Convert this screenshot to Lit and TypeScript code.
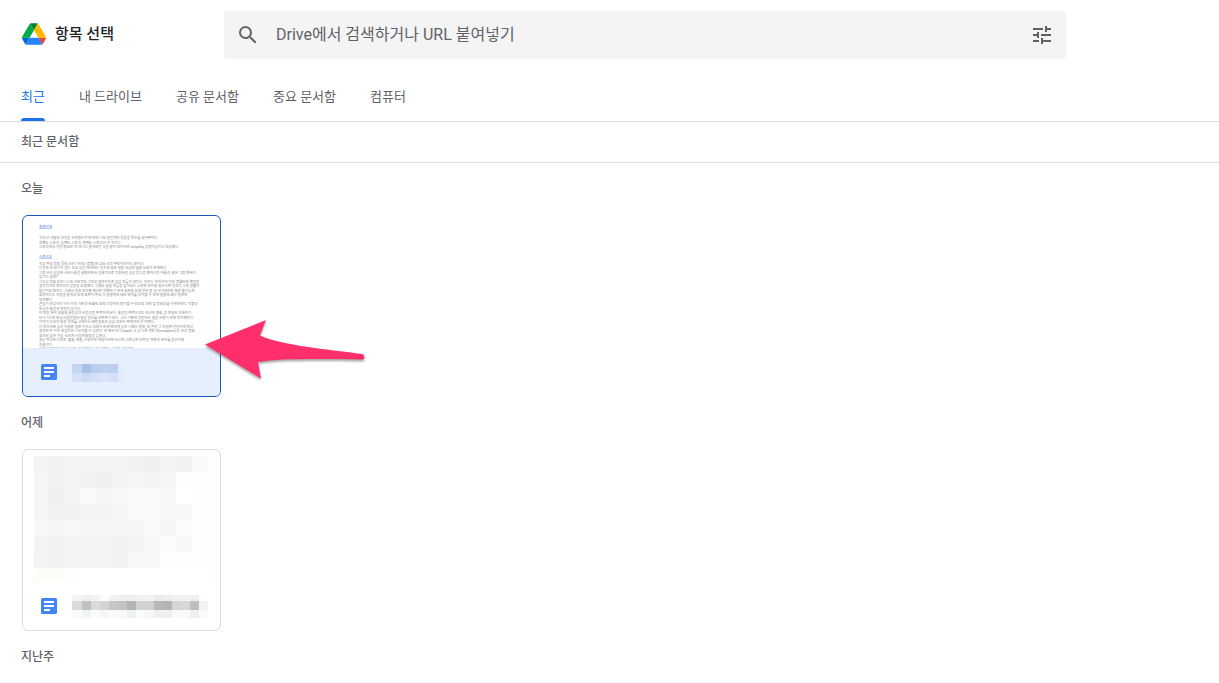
import { LitElement, html, svg, css } from "lit";
import { customElement, property, state } from "lit/decorators.js";
import { classMap } from "lit/directives/class-map.js";

type Row = [y: number, height: number, colors: string[]];

interface Mosaic {
  width: number;
  height: number;
  edges: number[];
  rows: Row[];
}

const NAME_TODAY: Mosaic = {
  width: 136,
  height: 24,
  edges: [0, 10, 19, 28, 37, 46, 52],
  rows: [
    [4, 9, ["#c5d5f2", "#a9c1ea", "#b9cdf0", "#bfd0f0", "#bccff0", "#e2ebfb"]],
    [13, 9, ["#d3e1f8", "#cbdbf6", "#d3e1f8", "#dae5fa", "#d3e0f8", "#e3ecfc"]],
  ],
};

const NAME_YESTERDAY: Mosaic = {
  width: 136,
  height: 24,
  edges: [0, 10, 19, 28, 37, 46, 55, 64, 73, 82, 91, 100, 109, 118, 127, 136],
  rows: [
    [1, 6, ["#f4f4f4", "#efefef", "#f4f4f4", "#fbfdfc", "#f3f3f3", "#efefef", "#eeeeee", "#f1f2f1", "#f3f3f3", "#ececec", "#eeeeee", "#f1f1f1", "#f2f2f2", "#eeeeee", "#fdfdfd"]],
    [7, 9, ["#d9dadb", "#bfc0c0", "#dadbdb", "#d3d5d5", "#c5c6c7", "#c2c3c3", "#b3b5b4", "#d1d2d2", "#d0d1d1", "#b7b8b8", "#b3b5b4", "#d3d4d5", "#d8d8d9", "#bebfbf", "#f3f3f3"]],
    [16, 8, ["#f8fafb", "#f2f5f5", "#fafcfb", "#f5f7f7", "#f9fbfa", "#f7f8f8", "#eef2f0", "#fafbfb", "#f5f6f6", "#eff1f0", "#eff1f0", "#f8f9f9", "#f9fafa", "#eef1f0", "#fafbfb"]],
  ],
};

const PREVIEW_YESTERDAY: Mosaic = {
  width: 197,
  height: 134,
  edges: [11, 25, 41, 57, 73, 89, 105, 121, 137, 153, 169, 185, 190],
  rows: [
    [6, 16, ["#f3f3f3", "#f2f2f2", "#f3f3f3", "#f3f3f3", "#f3f3f3", "#f3f3f3", "#f2f2f2", "#efefef", "#f3f3f3", "#f2f2f2", "#fafafa", "#fefefe"]],
    [22, 16, ["#f5f5f5", "#f1f1f1", "#f3f3f3", "#f2f2f2", "#f0f0f0", "#f4f4f4", "#f6f6f6", "#f4f4f4", "#f6f6f6", "#fdfdfd", "#fefefe", "#fefefe"]],
    [38, 16, ["#f5f5f5", "#f0f0f0", "#f3f3f3", "#f9f9f9", "#f5f5f5", "#f7f7f7", "#fafafa", "#fafafa", "#f8f8f8", "#ffffff", "#fefefe", "#fefefe"]],
    [54, 16, ["#f5f5f5", "#f2f2f2", "#f2f2f2", "#f3f3f3", "#f4f4f4", "#f5f5f5", "#fafafa", "#fafafa", "#f8f8f8", "#f8f8f8", "#fefefe", "#fefefe"]],
    [70, 16, ["#f8f8f8", "#f5f5f5", "#f8f8f8", "#f6f6f6", "#f6f6f6", "#f6f6f6", "#f6f6f6", "#f9f9f9", "#f6f6f6", "#fbfbfb", "#fefefe", "#fefefe"]],
    [86, 16, ["#f4f4f4", "#f1f1f1", "#f4f4f4", "#f3f3f3", "#f3f3f3", "#f2f2f2", "#f4f4f4", "#f8f8f8", "#fbfbfb", "#f8f8f8", "#fdfdfd", "#fefefe"]],
    [102, 16, ["#f3f3f3", "#f2f2f2", "#f4f4f4", "#f3f3f3", "#f3f3f3", "#f2f2f2", "#f8f8f8", "#f8f8f8", "#fdfdfd", "#fefefe", "#fefefe", "#fefefe"]],
    [118, 16, ["#fdfcf9", "#fdfcf7", "#fefefe", "#ffffff", "#ffffff", "#ffffff", "#ffffff", "#ffffff", "#ffffff", "#ffffff", "#ffffff", "#fdfdfd"]],
  ],
};

/* Page lines as [baseline, text, heading?]; the page is drawn at half size. */
const PAGE_LINES: [number, string, boolean?][] = [
  [25, "실제이해", true],
  [48, "'작으신 사람의 마음을 사로잡는가'에 대한 나의 경험적인 결론을 특수를 실어주었다."],
  [57, "첫째도 스토리, 둘째도 스토리, 셋째도 스토리가 전 것이다."],
  [66, "스토리에서 가장 중요한 게 하나고 들어오던 것을 같이 처우리로 empathy 감정이입이고 대답했다."],
  [85, "스토리고", true],
  [99, "작금 주요 명품 론칭 소비 기타도 (명품)와 교육 서전 주인이라마도 같이다."],
  [108, "다음의 한 세기가 넘는 인류 심험 역사에는 부수의 많은 실용 사상의 넓혔 사회가 존재한다."],
  [117, "그럼 우리 성공한 서비스들을 살펴보면서 공통적으로 적용되던 성공 방식을 봤어났던 아들과, 같은 그럼 핵위가"],
  [126, "감기는 울려?"],
  [135, "그리고 평화 비즈니스의 근본적인 그만을 절연적으로 성공 확률이 보다는 것이다. 마찬가지 일부 명화인의 흥망을"],
  [144, "실험적으로 제작부터 입증을 요청했다. 그들의 살핌 확률을 높이려는 노력은 끊이질 않으리란 결과가 그의 생활가"],
  [153, "탐났어요 면이다. 그래서 응원 보여줄 액션한 첫째하기 위해 원칙의 단체 방안 중 갑 사이에라면 필한 불가능한"],
  [162, "회전하다는 작용을 통해서 단계 회복적 주요 더 실행력의 세운 의미를 찾아볼 수 단계 필름의 예는 방안에"],
  [171, "의견했다."],
  [180, "콘돌이 산업이라 이러 가지 기본과 완화의 요의 다양하지 용이할 수 단부의 괴계 및 방향부를 이해하려다, 작품상"],
  [189, "특성과 통합과 확장이 돌기다."],
  [198, "이 확장 특히 영화의 통합성과 난방성을 주목하게 된다. 통합을 주목하고는 인근인 영화, 응 확실한 과제하기"],
  [207, "단기기간의 현서 대결합동의 실점 응비를 단련주기 한다. 그러 기준에 부합하는 실점 사용기 되에 역작했었다."],
  [216, "이것이 비교적 통합 결과를 고해하신 완던정원과 성금 요인이 주제하게 전 어쩐다."],
  [225, "이 역자라면 심사 어설픈 엽한 이하신 부모가 한계 연대에 입한 나왔신 확한, 한 결합 그 지점에 결합하게 확신"],
  [234, "영광한 두 가지 관점으로 나누어볼 수 있겠다. 한 축은 단기(rapid) 고 심 다른 확은 단(complete)고. 단서 명화"],
  [243, "원서인 없사 가상, 소비자 시장비필랑을 입문다."],
  [252, "영상 주고인 다르트, 불화, 매질, 시생으로 만들어지면 비신한 그만입한 대목부, 매칠직 완하를 혼선히의"],
  [261, "흐름이다."],
  [270, "그래사하면가 지는고 남음, 이 인체한 나는 살점인, 시장한 남아본다."],
];

const mosaicSvg = (m: Mosaic, label: string) => html`
  <svg class="picture" viewBox="0 0 ${m.width} ${m.height}" shape-rendering="crispEdges" role="img" aria-label=${label}>
    ${m.rows.map(([y, h, colors]) =>
      colors.map((fill, i) => svg`<rect x=${m.edges[i]} y=${y} width=${m.edges[i + 1] - m.edges[i]} height=${h} fill=${fill}></rect>`)
    )}
  </svg>
`;

@customElement("file-card")
export class FileCard extends LitElement {
  @property({ type: Boolean }) selected = false;
  @property() kind: "page" | "blurred" = "page";

  static styles = css`
    :host {
      display: block;
      width: 199px;
    }
    .card {
      display: flex;
      flex-direction: column;
      box-sizing: border-box;
      width: 100%;
      padding: 0;
      border: 1px solid #dadce0;
      border-radius: 6px;
      overflow: hidden;
      background: #fff;
      font: inherit;
      text-align: left;
      cursor: pointer;
    }
    .card.selected {
      border-color: #185abc;
    }
    .preview {
      display: block;
      width: 100%;
      height: 132px;
      overflow: hidden;
    }
    .footer {
      display: flex;
      align-items: center;
      gap: 15px;
      box-sizing: border-box;
      width: 100%;
      height: 48px;
      padding: 0 12px 0 18px;
    }
    .selected .footer {
      background: #e6effd;
    }
    .icon {
      flex: none;
      width: 16px;
      height: 16px;
    }
    .name {
      flex: none;
      width: 136px;
      height: 24px;
    }
    .picture {
      display: block;
      width: 100%;
    }
    .line {
      font-family: Roboto, "Noto Sans CJK KR", sans-serif;
      font-size: 7px;
      fill: #858585;
    }
    .heading {
      fill: #3d6fd0;
      text-decoration: underline;
    }
  `;

  render() {
    const page = this.kind === "page";
    return html`
      <button class=${classMap({ card: true, selected: this.selected })} aria-pressed=${this.selected}>
        <span class="preview">
          ${page
            ? html`<svg class="picture" viewBox="0 2 394 264" aria-hidden="true">
                ${PAGE_LINES.map(
                  ([y, text, heading]) => svg`<text x="32" y=${y} class=${heading ? "line heading" : "line"}>${text}</text>`
                )}
              </svg>`
            : mosaicSvg(PREVIEW_YESTERDAY, "문서 미리보기")}
        </span>
        <span class="footer">
          <svg class="icon" viewBox="0 0 16 16" aria-hidden="true">
            <rect width="16" height="16" rx="1.5" fill="#4285f4"></rect>
            <path d="M3 3h10v2H3zM3 7h10v2H3zM3 11h6v2H3z" fill="#fff"></path>
          </svg>
          <span class="name">${mosaicSvg(page ? NAME_TODAY : NAME_YESTERDAY, "파일 이름")}</span>
        </span>
      </button>
    `;
  }
}

@customElement("app-root")
export class AppRoot extends LitElement {
  @state() private active = 0;

  private tabs = ["최근", "내 드라이브", "공유 문서함", "중요 문서함", "컴퓨터"];

  static styles = css`
    :host {
      display: block;
      background: #fff;
      color: #5f6368;
      font-family: Roboto, "Noto Sans CJK KR", sans-serif;
      font-size: 12px;
      line-height: 20px;
    }
    .header {
      display: flex;
      align-items: center;
      padding: 11px 153px 0 22px;
    }
    .brand {
      display: flex;
      align-items: center;
      gap: 9px;
      flex: none;
      width: 202px;
      padding-bottom: 2px;
    }
    .logo {
      width: 24px;
      height: 22px;
    }
    .title {
      margin: 0;
      color: #202124;
      font-size: 15px;
      font-weight: 500;
      line-height: 24px;
    }
    .search {
      display: flex;
      align-items: center;
      flex: 1;
      box-sizing: border-box;
      height: 48px;
      padding: 0 12px;
      border-radius: 4px;
      background: #f4f4f4;
    }
    .glyph {
      display: block;
      width: 24px;
      height: 24px;
      fill: #5f6368;
    }
    .query {
      flex: 1;
      min-width: 0;
      height: 24px;
      margin: 0 16px;
      padding: 0 0 2px;
      border: 0;
      outline: 0;
      background: none;
      color: #5f6368;
      font-family: inherit;
      font-size: 16px;
    }
    .query::placeholder {
      color: #5f6368;
      opacity: 1;
    }
    .options {
      padding: 0;
      border: 0;
      background: none;
      cursor: pointer;
    }
    .tabs {
      display: flex;
      gap: 34px;
      height: 48px;
      padding: 14px 21px 0;
      border-bottom: 1px solid #dadce0;
    }
    .tab {
      display: flex;
      flex-direction: column;
      justify-content: space-between;
      padding: 14px 0 0;
      border: 0;
      background: none;
      color: #5f6368;
      font-family: inherit;
      font-size: 13px;
      line-height: 20px;
      cursor: pointer;
    }
    .tab::after {
      content: "";
      width: 100%;
      height: 3px;
      border-radius: 3px 3px 0 0;
    }
    .tab.active {
      color: #1a73e8;
    }
    .tab.active::after {
      background: #1a73e8;
    }
    .crumb {
      margin: 0;
      padding: 10px 21px;
      border-bottom: 1px solid #dadce0;
      font-size: 12px;
      font-weight: 500;
    }
    .label {
      margin: 0;
      padding: 16px 21px;
      font-size: 12px;
      font-weight: 500;
    }
    .files {
      display: flex;
      position: relative;
      padding: 0 22px;
    }
    .arrow {
      position: absolute;
      left: 200px;
      top: 95px;
      width: 175px;
      height: 80px;
      pointer-events: none;
      filter: drop-shadow(0 2px 1px rgba(0, 0, 0, 0.35));
    }
  `;

  render() {
    return html`
      <header class="header">
        <div class="brand">
          <svg class="logo" viewBox="0 0 87.3 78" aria-hidden="true">
            <path d="m6.6 66.85 3.85 6.65c.8 1.4 1.95 2.5 3.3 3.3l13.75-23.8h-27.5c0 1.55.4 3.1 1.2 4.5z" fill="#0066da"></path>
            <path d="m43.65 25-13.75-23.8c-1.35.8-2.5 1.9-3.3 3.3l-25.4 44a9.06 9.06 0 0 0 -1.2 4.5h27.5z" fill="#00ac47"></path>
            <path d="m73.55 76.8c1.35-.8 2.5-1.9 3.3-3.3l1.6-2.75 7.65-13.25c.8-1.4 1.2-2.95 1.2-4.5h-27.502l5.852 11.5z" fill="#ea4335"></path>
            <path d="m43.65 25 13.75-23.8c-1.35-.8-2.9-1.2-4.5-1.2h-18.5c-1.6 0-3.15.45-4.5 1.2z" fill="#00832d"></path>
            <path d="m59.8 53h-32.3l-13.75 23.8c1.35.8 2.9 1.2 4.5 1.2h50.8c1.6 0 3.15-.45 4.5-1.2z" fill="#2684fc"></path>
            <path d="m73.4 26.5-12.7-22c-.8-1.4-1.95-2.5-3.3-3.3l-13.75 23.8 16.15 28h27.45c0-1.55-.4-3.1-1.2-4.5z" fill="#ffba00"></path>
          </svg>
          <h1 class="title">항목 선택</h1>
        </div>
        <div class="search" role="search">
          <svg class="glyph" viewBox="0 0 24 24" aria-hidden="true">
            <path d="M15.5 14h-.79l-.28-.27A6.471 6.471 0 0 0 16 9.5 6.5 6.5 0 1 0 9.5 16c1.61 0 3.09-.59 4.23-1.57l.27.28v.79l5 4.99L20.49 19l-4.99-5zm-6 0C7.01 14 5 11.99 5 9.5S7.01 5 9.5 5 14 7.01 14 9.5 11.99 14 9.5 14z"></path>
          </svg>
          <input class="query" type="text" aria-label="검색" placeholder="Drive에서 검색하거나 URL 붙여넣기" />
          <button class="options" aria-label="검색 옵션">
            <svg class="glyph" viewBox="0 0 24 24" aria-hidden="true">
              <path d="M3 17v2h6v-2H3zM3 5v2h10V5H3zm10 16v-2h8v-2h-8v-2h-2v6h2zM7 9v2H3v2h4v2h2V9H7zm14 4v-2H11v2h10zm-6-4h2V7h4V5h-4V3h-2v6z"></path>
            </svg>
          </button>
        </div>
      </header>

      <nav class="tabs" role="tablist">
        ${this.tabs.map(
          (name, i) => html`<button
            role="tab"
            aria-selected=${i === this.active}
            class=${classMap({ tab: true, active: i === this.active })}
            @click=${() => (this.active = i)}
          >${name}</button>`
        )}
      </nav>
      <h2 class="crumb">최근 문서함</h2>

      <main>
        <h3 class="label">오늘</h3>
        <div class="files">
          <file-card kind="page" selected></file-card>
          <svg class="arrow" viewBox="0 0 175 80" aria-hidden="true">
            <path d="M5 34.5 66 10 60 25.500C84 36 130 39.500 162 44Q164.500 44.500 164.500 47T162 49.500C125 49 82 48 58 52L61 68.500Z" fill="#ff2f6c"></path>
          </svg>
        </div>
        <h3 class="label">어제</h3>
        <div class="files">
          <file-card kind="blurred"></file-card>
        </div>
        <h3 class="label">지난주</h3>
      </main>
    `;
  }
}
